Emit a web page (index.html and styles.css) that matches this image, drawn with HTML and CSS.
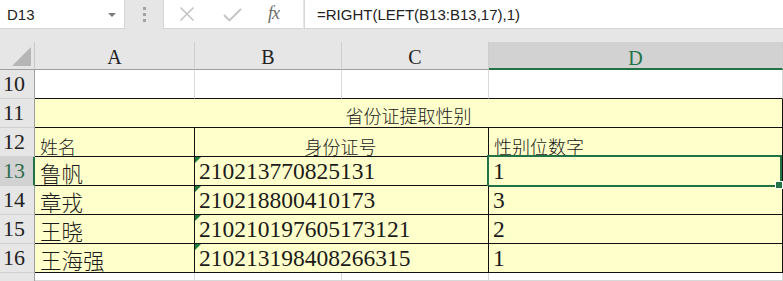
FILE: index.html
```html
<!DOCTYPE html>
<html lang="zh-CN">
<head>
<meta charset="utf-8">
<title>省份证提取性别</title>
<link rel="stylesheet" href="styles.css">
</head>
<body>
<div class="app">
  <div class="fbar">
    <div class="namebox"><span class="ref">D13</span><span class="caret"></span></div>
    <div class="grip"><i></i><i></i><i></i></div>
    <div class="fxbox">
      <svg class="ico" width="16" height="16" viewBox="0 0 16 16"><path d="M1.5 1.5 L14.5 14.5 M14.5 1.5 L1.5 14.5" stroke="#c4c4c4" stroke-width="1.6" fill="none"/></svg>
      <svg class="ico" width="19" height="14" viewBox="0 0 19 14"><path d="M1 7 L6.5 12.5 L18 1" stroke="#c4c4c4" stroke-width="1.8" fill="none"/></svg>
      <span class="fx">fx</span>
    </div>
    <div class="formula">=RIGHT(LEFT(B13:B13,17),1)</div>
  </div>

  <div class="sheet">
    <div class="corner"><span class="tri"></span></div>
    <div class="ch">A</div>
    <div class="ch">B</div>
    <div class="ch">C</div>
    <div class="ch ch-sel">D</div>

    <div class="rh">10</div>
    <div class="c w edge"></div>
    <div class="c w edge"></div>
    <div class="c w edge"></div>
    <div class="c w edge"></div>

    <div class="rh">11</div>
    <div class="c y title">省份证提取性别</div>

    <div class="rh">12</div>
    <div class="c y small">姓名</div>
    <div class="c y small bc center">身份证号</div>
    <div class="c y small">性别位数字</div>

    <div class="rh rh-sel">13</div>
    <div class="c y zh">鲁帆</div>
    <div class="c y bc num flag">210213770825131</div>
    <div class="c y num sel">1</div>

    <div class="rh">14</div>
    <div class="c y zh">章戎</div>
    <div class="c y bc num flag">210218800410173</div>
    <div class="c y num">3</div>

    <div class="rh">15</div>
    <div class="c y zh">王晓</div>
    <div class="c y bc num flag">210210197605173121</div>
    <div class="c y num">2</div>

    <div class="rh">16</div>
    <div class="c y zh">王海强</div>
    <div class="c y bc num flag">210213198408266315</div>
    <div class="c y num">1</div>

    <div class="rh last"></div>
    <div class="c w"></div>
    <div class="c w"></div>
    <div class="c w"></div>
    <div class="c w"></div>
  </div>
</div>
</body>
</html>
```

FILE: styles.css
```css
* { box-sizing: border-box; }
html, body { margin: 0; padding: 0; }
body {
  width: 783px;
  height: 281px;
  overflow: hidden;
  background: #e6e6e6;
  font-family: "Liberation Sans", Arial, sans-serif;
}
.app { width: 783px; }

/* formula bar */
.fbar {
  display: flex;
  height: 29px;
  margin-bottom: 13px;
}
.namebox {
  width: 125px;
  background: #fff;
  border-bottom: 1px solid #d6d6d6;
  border-right: 1px solid #d6d6d6;
  display: flex;
  align-items: center;
  justify-content: space-between;
  padding: 0 7px 0 7px;
  font-size: 15px;
  color: #222;
}
.caret {
  width: 0; height: 0;
  border-left: 4px solid transparent;
  border-right: 4px solid transparent;
  border-top: 4px solid #7a7a7a;
  margin-right: 1px;
  margin-top: 1px;
}
.grip {
  width: 38px;
  display: flex;
  flex-direction: column;
  align-items: center;
  justify-content: center;
  gap: 3px;
  padding-bottom: 1px;
}
.grip i {
  display: block;
  width: 3px; height: 3px;
  background: #a3a3a3;
}
.fxbox {
  width: 140px;
  background: #fff;
  border-bottom: 1px solid #d6d6d6;
  border-left: 1px solid #d6d6d6;
  display: flex;
  align-items: center;
  padding-left: 15px;
}
.fxbox .ico:nth-child(1) { margin-right: 28px; }
.fxbox .ico:nth-child(2) { margin-right: 26px; margin-top: 2px; }
.fx {
  font-family: "Liberation Serif", "Times New Roman", serif;
  font-style: italic;
  font-size: 18px;
  color: #6e6e6e;
  letter-spacing: -1px;
  margin-top: -1px;
}
.formula {
  flex: 1;
  margin-left: 1px;
  background: #fff;
  border-bottom: 1px solid #d6d6d6;
  border-left: 1px solid #d6d6d6;
  display: flex;
  align-items: center;
  padding-left: 12px;
  font-size: 15px;
  color: #222;
}

/* grid */
.sheet {
  display: grid;
  grid-template-columns: 35px 160px 147px 147px 294px;
  grid-template-rows: 28px repeat(7, 29px) 8px;
  background: #fff;
}
.corner {
  background: #e6e6e6;
  border-right: 1px solid #c8c8c8;
  border-bottom: 1px solid #9e9e9e;
  position: relative;
}
.tri {
  position: absolute;
  right: 3px; bottom: 3px;
  width: 0; height: 0;
  border-left: 19px solid transparent;
  border-bottom: 19px solid #b6b6b6;
}
.ch {
  background: #e6e6e6;
  border-right: 1px solid #cdcdcd;
  border-bottom: 1px solid #9e9e9e;
  display: flex;
  align-items: center;
  justify-content: center;
  padding-top: 4px;
  font-family: "Liberation Serif", "Times New Roman", serif;
  font-size: 20px;
  color: #222;
}
.ch-sel {
  background: #d2d2d2;
  border-bottom: 2px solid #217346;
  color: #217346;
  padding-top: 6px;
}
.rh {
  background: #e6e6e6;
  border-right: 1px solid #9e9e9e;
  border-bottom: 1px solid #d0d0d0;
  display: flex;
  align-items: center;
  padding-left: 3px;
  font-family: "Liberation Serif", "Times New Roman", serif;
  font-size: 22px;
  color: #222;
}
.rh.last { border-bottom: 0; }
.rh-sel {
  background: #d2d2d2;
  border-right: 2px solid #217346;
  color: #2f6e4c;
}

.c {
  display: flex;
  align-items: flex-end;
  padding: 0 0 1px 4px;
  font-family: "Liberation Serif", "Times New Roman", "Noto Sans CJK SC", serif;
  font-size: 23.5px;
  line-height: 1;
  color: #1a1a1a;
  white-space: nowrap;
}
.w {
  background: #fff;
  border-right: 1px solid #d8d8d8;
  border-bottom: 1px solid #d8d8d8;
}
.w.edge { border-bottom-color: #111; }
.y {
  background: #ffffcc;
  border-right: 1px solid #111;
  border-bottom: 1px solid #111;
}
.title {
  grid-column: span 4;
  justify-content: center;
  padding: 0 0 3px 0;
  font-family: "Noto Sans CJK SC", sans-serif;
  font-weight: 300;
  font-size: 18px;
}
.small {
  font-family: "Noto Sans CJK SC", sans-serif;
  font-weight: 300;
  font-size: 18px;
  padding-bottom: 1px;
  padding-left: 5px;
}
.bc { grid-column: span 2; }
.center { justify-content: center; padding-left: 0; padding-right: 2px; }
.zh {
  font-family: "Noto Sans CJK SC", sans-serif;
  font-weight: 300;
  font-size: 21.5px;
  padding-bottom: 2px;
  padding-left: 5px;
}
.num { padding-bottom: 2px; padding-left: 4px; }
.flag { position: relative; }
.flag::before {
  content: "";
  position: absolute;
  left: 0; top: 0;
  width: 0; height: 0;
  border-top: 6px solid #1e7b3c;
  border-right: 6px solid transparent;
}
.sel { position: relative; }
.sel::after {
  content: "";
  position: absolute;
  left: -2px; top: -2px; right: 0; bottom: -2px;
  border: 2px solid #217346;
  pointer-events: none;
}
.sel::before {
  content: "";
  position: absolute;
  right: -1px; bottom: -4px;
  width: 6px; height: 6px;
  background: #217346;
  border: 1px solid #fff;
  z-index: 1;
}
```
